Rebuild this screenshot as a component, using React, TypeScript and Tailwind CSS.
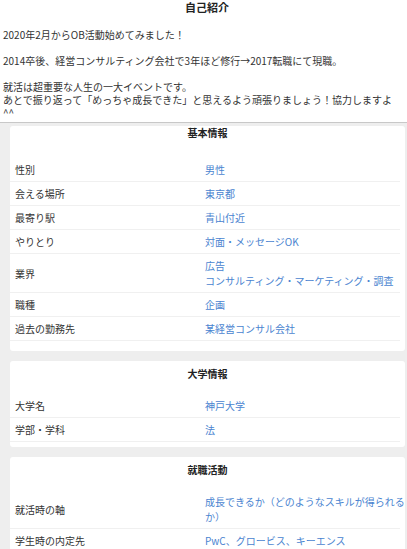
import React from "react";

type Row = { label: string; value: string[] };

const FONT = { fontFamily: '"Noto Sans CJK JP", "Noto Sans", sans-serif' };

function Card({
  title,
  rows,
  first,
  pb,
}: {
  title: string;
  rows: Row[];
  first?: boolean;
  pb: string;
}) {
  return (
    <div className={`bg-white rounded-[3px] ${pb} ${first ? "pt-[1px]" : "pt-[7px]"}`}>
      <div
        className={`text-center font-bold text-[10px] leading-[12px] text-[#222] ${
          first ? "mb-[19px]" : "mb-[14px]"
        }`}
      >
        {title}
      </div>
      <div className="mr-[5px]">
        {rows.map((r, i) => (
          <div
            key={i}
            className="grid grid-cols-[190px_1fr] items-center pl-[5px] py-[4px] border-b border-[#f0f0f0]"
          >
            <div className="text-[10px] leading-[15px] text-[#333]">{r.label}</div>
            <div className="text-[10px] leading-[15px] text-[#4a84d0] whitespace-nowrap">
              {r.value.map((v, j) => (
                <div key={j}>{v}</div>
              ))}
            </div>
          </div>
        ))}
      </div>
    </div>
  );
}

export default function App() {
  const basic: Row[] = [
    { label: "性別", value: ["男性"] },
    { label: "会える場所", value: ["東京都"] },
    { label: "最寄り駅", value: ["青山付近"] },
    { label: "やりとり", value: ["対面・メッセージOK"] },
    { label: "業界", value: ["広告", "コンサルティング・マーケティング・調査"] },
    { label: "職種", value: ["企画"] },
    { label: "過去の勤務先", value: ["某経営コンサル会社"] },
  ];
  const univ: Row[] = [
    { label: "大学名", value: ["神戸大学"] },
    { label: "学部・学科", value: ["法"] },
  ];
  const job: Row[] = [
    { label: "就活時の軸", value: ["成長できるか（どのようなスキルが得られる", "か）"] },
    { label: "学生時の内定先", value: ["PwC、グロービス、キーエンス"] },
  ];

  return (
    <div className="min-h-[549px] bg-[#eeeeee]" style={FONT}>
      <div className="bg-white px-[3px] pt-[1px] pb-[3px] border-b border-[#c8c8c8]">
        <div className="text-center pl-[7px] font-bold text-[11px] leading-[12px] text-[#222]">
          自己紹介
        </div>
        <div className="mt-[15px] text-[10px] leading-[13px] text-[#333]">
          <div>2020年2月からOB活動始めてみました！</div>
          <div className="h-[13px]" />
          <div>2014卒後、経営コンサルティング会社で3年ほど修行→2017転職にて現職。</div>
          <div className="h-[13px]" />
          <div>就活は超重要な人生の一大イベントです。</div>
          <div>
            あとで振り返って「めっちゃ成長できた」と思えるよう頑張りましょう！協力しますよ
            <br />
            ^^
          </div>
        </div>
      </div>
      <div className="pl-[10px] pr-[2px] pt-[3px] pb-[10px] flex flex-col gap-[10px]">
        <Card title="基本情報" rows={basic} first pb="pb-[10px]" />
        <Card title="大学情報" rows={univ} pb="pb-[5px]" />
        <Card title="就職活動" rows={job} pb="pb-[10px]" />
      </div>
    </div>
  );
}
